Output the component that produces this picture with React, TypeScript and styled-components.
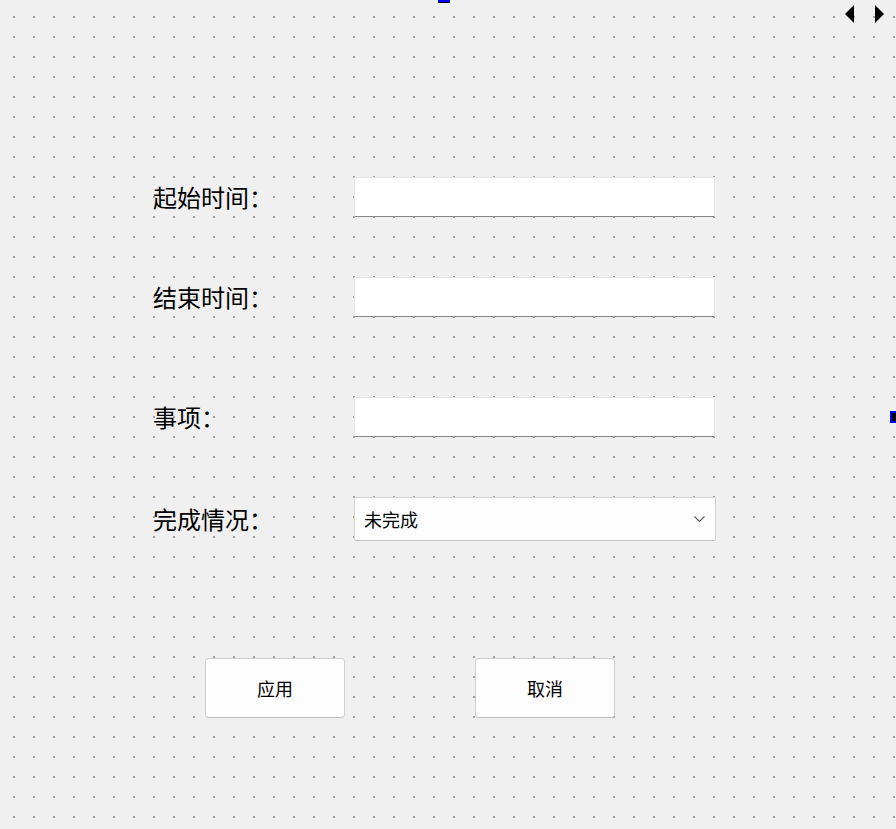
import React from "react";
import styled, { createGlobalStyle } from "styled-components";

const Global = createGlobalStyle`
  html, body { margin: 0; padding: 0; }
  body { background: #f0f0f0; font-family: "Noto Sans CJK SC", "Noto Sans", sans-serif; }
`;

const Canvas = styled.div`
  position: relative;
  width: 896px;
  height: 829px;
  overflow: hidden;
  background-color: #f0f0f0;
  background-image: conic-gradient(from 270deg at 2px 2px, #a0a0a0 25%, transparent 0);
  background-size: 20px 20px;
  background-position: 13px 16px;
  box-sizing: border-box;
  padding: 177px 0 0 153px;
`;

const Form = styled.div`
  display: flex;
  flex-direction: column;
`;

const Row = styled.div<{ $top: number }>`
  display: flex;
  align-items: center;
  margin-top: ${(p) => p.$top}px;
`;

const Label = styled.div`
  width: 201px;
  font-size: 24px;
  line-height: 1;
  color: #000;
  white-space: nowrap;
`;

const LineEdit = styled.div`
  width: 361px;
  height: 40px;
  box-sizing: border-box;
  background: #ffffff;
  border: 1px solid #e6e6e6;
  border-bottom: 1px solid #868686;
`;

const Combo = styled.div`
  width: 362px;
  height: 44px;
  box-sizing: border-box;
  background: #fdfdfd;
  border: 1px solid #d3d3d3;
  border-bottom-color: #bdbdbd;
  border-radius: 2px;
  display: flex;
  align-items: center;
  justify-content: space-between;
  padding: 0 9px 0 9px;
  font-size: 18px;
  color: #000;
`;

const ButtonRow = styled.div`
  display: flex;
  gap: 130px;
  margin-top: 117px;
  padding-left: 52px;
`;

const Button = styled.div`
  width: 140px;
  height: 60px;
  box-sizing: border-box;
  background: #fdfdfd;
  border: 1px solid #cfcfcf;
  border-bottom-color: #bdbdbd;
  border-radius: 4px;
  display: flex;
  align-items: center;
  justify-content: center;
  font-size: 18px;
  color: #000;
`;

const Handle = styled.div<{ $x: number; $y: number; $w: number; $h: number }>`
  position: absolute;
  left: ${(p) => p.$x}px;
  top: ${(p) => p.$y}px;
  width: ${(p) => p.$w}px;
  height: ${(p) => p.$h}px;
  box-sizing: border-box;
  background: #000;
  border: 2px solid #0000ff;
`;

const TopHandle = styled.div`
  position: absolute;
  left: 438px;
  top: 0;
  width: 12px;
  height: 3px;
  box-sizing: border-box;
  background: #0000ff;
  border-bottom: 1px solid #000;
`;

const Arrows = styled.div`
  position: absolute;
  top: 5px;
  left: 845px;
  display: flex;
  gap: 21px;
`;

const Chevron = () => (
  <svg width="12" height="7" viewBox="0 0 12 7">
    <polyline points="0.5,0.5 5.5,5.5 10.5,0.5" fill="none" stroke="#5c5c5c" strokeWidth="1.1" />
  </svg>
);

export default function App() {
  return (
    <>
      <Global />
      <Canvas>
        <Form>
          <Row $top={0}>
            <Label>起始时间：</Label>
            <LineEdit />
          </Row>
          <Row $top={60}>
            <Label>结束时间：</Label>
            <LineEdit />
          </Row>
          <Row $top={80}>
            <Label>事项：</Label>
            <LineEdit />
          </Row>
          <Row $top={60}>
            <Label>完成情况：</Label>
            <Combo>
              <span>未完成</span>
              <Chevron />
            </Combo>
          </Row>
          <ButtonRow>
            <Button>应用</Button>
            <Button>取消</Button>
          </ButtonRow>
        </Form>
        <TopHandle />
        <Handle $x={890} $y={411} $w={12} $h={12} />
        <Arrows>
          <svg width="9" height="18" viewBox="0 0 9 18">
            <polygon points="9,0 0,9 9,18" fill="#000" />
          </svg>
          <svg width="9" height="18" viewBox="0 0 9 18">
            <polygon points="0,0 9,9 0,18" fill="#000" />
          </svg>
        </Arrows>
      </Canvas>
    </>
  );
}
